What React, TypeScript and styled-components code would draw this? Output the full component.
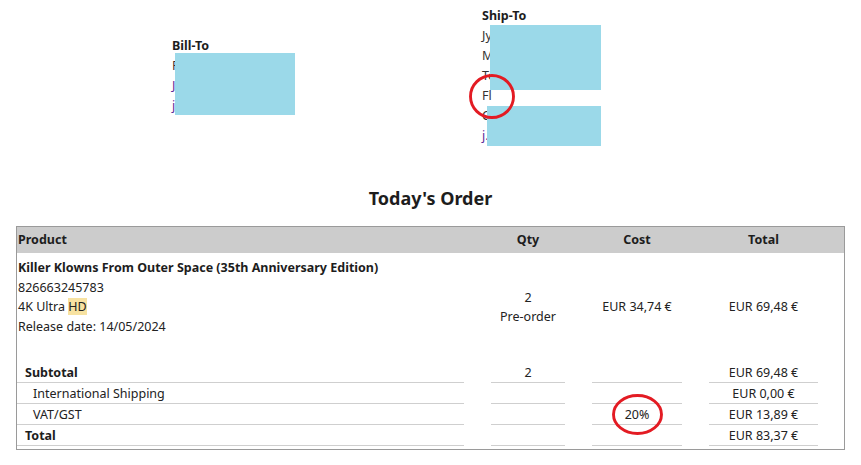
import React from "react";
import styled, { createGlobalStyle } from "styled-components";

const Global = createGlobalStyle`
  html, body { margin: 0; padding: 0; background: #ffffff; }
  body {
    font-family: "Noto Sans", "Open Sans", sans-serif;
    font-size: 12.5px;
    color: #222222;
  }
`;

const Page = styled.div`
  padding: 6px 8px 0 8px;
`;

const Addresses = styled.section`
  display: grid;
  grid-template-columns: 310px auto;
  align-items: center;
  padding-left: 164px;
`;

const AddressBlock = styled.div`
  position: relative;
  display: flex;
  flex-direction: column;
  line-height: 20px;
`;

const AddressTitle = styled.div`
  font-weight: 700;
  color: #1d1d1d;
`;

const AddressLine = styled.div<{ $link?: boolean }>`
  position: relative;
  color: ${(p) => (p.$link ? "#5b2a9a" : "#333333")};
  white-space: nowrap;
`;

const Redaction = styled.div<{ $left: number; $top: number; $w: number; $h: number }>`
  position: absolute;
  left: ${(p) => p.$left}px;
  top: ${(p) => p.$top}px;
  width: ${(p) => p.$w}px;
  height: ${(p) => p.$h}px;
  background: #9bd9e9;
  z-index: 1;
`;

const Mark = styled.svg<{ $left: number; $top: number }>`
  position: absolute;
  left: ${(p) => p.$left}px;
  top: ${(p) => p.$top}px;
  overflow: visible;
  pointer-events: none;
  z-index: 2;
`;

const Heading = styled.h2`
  margin: 40px 0 16px 0;
  text-align: center;
  font-size: 18px;
  line-height: 24px;
  font-weight: 700;
  color: #1d1d1d;
`;

const Table = styled.div`
  margin: 0 8px;
  border: 1px solid #9a9a9a;
  padding-bottom: 3px;
`;

const Row = styled.div<{ $head?: boolean }>`
  display: grid;
  grid-template-columns: 447px 74px 90px 109px;
  column-gap: 27px;
  padding-right: 26px;
  background: ${(p) => (p.$head ? "#cccccc" : "transparent")};
  line-height: ${(p) => (p.$head ? "26px" : "20px")};
`;

const HeadCell = styled.div<{ $left?: boolean }>`
  font-weight: 700;
  color: #1d1d1d;
  text-align: ${(p) => (p.$left ? "left" : "center")};
  padding-left: ${(p) => (p.$left ? "1px" : "0")};
  white-space: nowrap;
`;

const ItemRow = styled(Row)`
  padding-top: 5px;
  min-height: 98px;
  align-items: center;
  line-height: 19.5px;
  margin-bottom: 6px;
`;

const ProductCell = styled.div`
  align-self: start;
  padding-left: 1px;
  display: flex;
  flex-direction: column;
  white-space: nowrap;
`;

const ProductName = styled.div`
  font-weight: 700;
  color: #1d1d1d;
`;

const Highlight = styled.span`
  background: #f7e2a1;
`;

const MidCell = styled.div`
  text-align: center;
  white-space: nowrap;
`;

const SumCell = styled.div<{ $indent?: number; $bold?: boolean; $center?: boolean }>`
  position: relative;
  border-bottom: 1px solid #cfcfcf;
  padding-left: ${(p) => p.$indent ?? 0}px;
  padding-top: 1px;
  font-weight: ${(p) => (p.$bold ? 700 : 400)};
  color: ${(p) => (p.$bold ? "#1d1d1d" : "#222222")};
  text-align: ${(p) => (p.$center ? "center" : "left")};
  height: 19px;
  line-height: 19px;
  white-space: nowrap;
`;

const Ellipse = ({ left, top, rx, ry }: { left: number; top: number; rx: number; ry: number }) => (
  <Mark $left={left} $top={top} width={rx * 2} height={ry * 2}>
    <ellipse cx={rx} cy={ry} rx={rx - 1.5} ry={ry - 1.5} fill="none" stroke="#e31b23" strokeWidth={2.9} />
  </Mark>
);

type Sum = { label: string; indent: number; bold?: boolean; qty?: string; cost?: string; total: string };

const sums: Sum[] = [
  { label: "Subtotal", indent: 8, bold: true, qty: "2", total: "EUR 69,48 €" },
  { label: "International Shipping", indent: 16, total: "EUR 0,00 €" },
  { label: "VAT/GST", indent: 16, cost: "20%", total: "EUR 13,89 €" },
  { label: "Total", indent: 8, bold: true, total: "EUR 83,37 €" },
];

export default function App() {
  return (
    <>
      <Global />
      <Page>
        <Addresses>
          <AddressBlock>
            <AddressTitle>Bill-To</AddressTitle>
            <AddressLine>P. Name</AddressLine>
            <AddressLine $link>J. Phone</AddressLine>
            <AddressLine $link>j.mail</AddressLine>
            <Redaction $left={3} $top={17} $w={120} $h={62} />
          </AddressBlock>
          <AddressBlock>
            <AddressTitle>Ship-To</AddressTitle>
            <AddressLine>Jy Name</AddressLine>
            <AddressLine>Main St</AddressLine>
            <AddressLine>Town</AddressLine>
            <AddressLine>
              Fl
              <Ellipse left={-13} top={-12} rx={23} ry={22.5} />
            </AddressLine>
            <AddressLine>Country</AddressLine>
            <AddressLine $link>j.mail</AddressLine>
            <Redaction $left={8} $top={19} $w={111} $h={65} />
            <Redaction $left={5} $top={100} $w={114} $h={40} />
          </AddressBlock>
        </Addresses>

        <Heading>Today's Order</Heading>

        <Table>
          <Row $head>
            <HeadCell $left>Product</HeadCell>
            <HeadCell>Qty</HeadCell>
            <HeadCell>Cost</HeadCell>
            <HeadCell>Total</HeadCell>
          </Row>
          <ItemRow>
            <ProductCell>
              <ProductName>Killer Klowns From Outer Space (35th Anniversary Edition)</ProductName>
              <div>826663245783</div>
              <div>
                4K Ultra <Highlight>HD</Highlight>
              </div>
              <div>Release date: 14/05/2024</div>
            </ProductCell>
            <MidCell>
              <div>2</div>
              <div>Pre-order</div>
            </MidCell>
            <MidCell>EUR 34,74 €</MidCell>
            <MidCell>EUR 69,48 €</MidCell>
          </ItemRow>
          {sums.map((s) => (
            <Row key={s.label}>
              <SumCell $indent={s.indent} $bold={s.bold}>
                {s.label}
              </SumCell>
              <SumCell $center>{s.qty ?? ""}</SumCell>
              <SumCell $center>
                {s.cost ?? ""}
                {s.cost && <Ellipse left={20} top={-10} rx={25.5} ry={20.5} />}
              </SumCell>
              <SumCell $center>{s.total}</SumCell>
            </Row>
          ))}
        </Table>
      </Page>
    </>
  );
}
